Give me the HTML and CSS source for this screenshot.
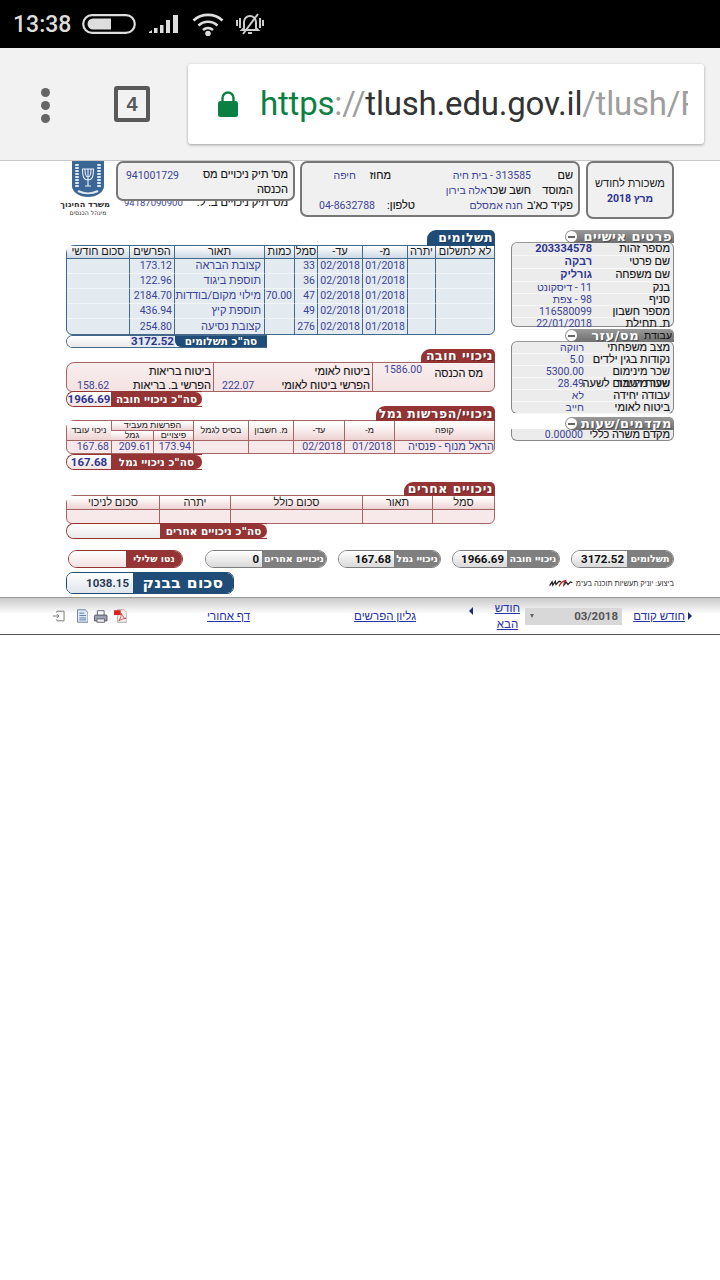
FILE: index.html
```
<!DOCTYPE html>
<html lang="he">
<head>
<meta charset="utf-8">
<title>משכורת לחודש</title>
<link rel="stylesheet" href="styles.css">
</head>
<body>
<header class="statusbar" dir="ltr">
  <span class="clock">13:38</span>
  <svg class="sb-battery" width="54" height="20" viewBox="0 0 54 20"><rect x="1.2" y="1.2" width="51.6" height="17.6" rx="8.8" fill="none" stroke="#ddd" stroke-width="2.2"/><path d="M11 4.5h18v11H11a5.5 5.5 0 0 1 0-11z" fill="#ddd"/></svg>
  <svg class="sb-signal" width="30" height="20" viewBox="0 0 30 20" fill="#ddd"><path d="M0 18l3-2v3H0zM5 14h3.500v5H5zM11 11h3.500v8H11zM17 6h4v13h-4zM24 1h5v18h-5z"/></svg>
  <svg class="sb-wifi" width="32" height="23" viewBox="0 0 32 23" fill="none" stroke="#ddd" stroke-width="2.600"><path d="M1.500 7.500C9.500 0 22.500 0 30.500 7.500"/><path d="M6.500 12.500c5.500-5 13.500-5 19 0"/><path d="M11 17c3-2.500 7-2.500 10 0"/><circle cx="16" cy="20.500" r="1.500" fill="#ddd"/></svg>
  <svg class="sb-bell" width="28" height="22" viewBox="0 0 28 22" fill="none" stroke="#ccc" stroke-width="2"><path d="M8 15V9a6 6 0 0 1 12 0v6l2 2H6z"/><path d="M1 7v6M4 5v10M24 5v10M27 7v6M12 20h4"/><path d="M22 1L7 21"/></svg>
</header>

<div class="toolbar" dir="ltr">
  <div class="menu-dots"><i></i><i></i><i></i></div>
  <div class="tab-count">4</div>
  <div class="omnibox">
    <svg class="lock" width="20" height="26" viewBox="0 0 20 26"><path d="M4.500 11V7a5.500 5.500 0 0 1 11 0v4" fill="none" stroke="#0b8043" stroke-width="2.400"/><rect y="10" width="20" height="16" rx="2.500" fill="#0b8043"/></svg>
    <div class="url"><span class="u-green">https</span><span class="u-gray">://</span><span class="u-dark">tlush.edu.gov.il</span><span class="u-gray">/tlush/R</span></div>
  </div>
</div>

<main class="sheet" dir="rtl">
  <section class="top">
    <div class="box month">
      <div class="month-t">משכורת לחודש</div>
      <div class="month-v">מרץ 2018</div>
    </div>
    <div class="box info">
      <span class="lb">שם</span><span class="vl">313585 - בית חיה</span><span class="lb mahoz">מחוז</span><span class="vl haifa">חיפה</span>
      <span class="lb">המוסד</span><span class="wide"><span class="lb">חשב שכר</span><span class="vl">אלה בירון</span></span>
      <span class="lb">פקיד כא'ב</span><span class="vl off8">חנה אמסלם</span><span class="lb">טלפון:</span><span class="vl phone" dir="ltr">04-8632788</span>
    </div>
    <div class="tik">
      <div class="box tik-box">
        <span class="lb tik-l">מס' תיק ניכויים מס הכנסה</span>
        <span class="vl tik-v">941001729</span>
      </div>
      <div class="tik-under"><span class="lb">מס' תיק ניכויים ב. ל.</span><span class="vl">94187090900</span></div>
    </div>
    <div class="ministry">
      <svg class="emblem" width="32" height="36" viewBox="0 0 32 36">
        <path d="M0 0h32v25c0 6-7 11-16 11S0 31 0 25z" fill="#3a6796"/>
        <g fill="none" stroke="#e8eef4" stroke-width="1.100">
          <path d="M16 8v17M13 8c0 6 1 8 3 8s3-2 3-8M10.500 8c0 9 2 11 5.500 11s5.500-2 5.500-11"/>
          <path d="M10 8h12M13 25h6"/>
        </g>
        <path d="M5 3v24M27 3v24" stroke="#dfe7ee" stroke-width="3.500" stroke-dasharray="2 1"/>
        <path d="M6 30c6 3 14 3 20 0" stroke="#dfe7ee" stroke-width="2" fill="none"/>
      </svg>
      <div class="min-a">משרד החינוך</div>
      <div class="min-b">מינהל הכנסים</div>
    </div>
  </section>

  <section class="cols">
    <div class="right-col">
      <div class="ptab"><span class="ptab-t">פרטים אישיים</span><i class="minus"></i></div>
      <div class="pbox p-a">
        <div class="prow"><span class="plb">מספר זהות</span><span class="pv strong">203334578</span></div>
        <div class="prow"><span class="plb">שם פרטי</span><span class="pv strong">רבקה</span></div>
        <div class="prow"><span class="plb">שם משפחה</span><span class="pv strong">גורליק</span></div>
        <div class="prow"><span class="plb">בנק</span><span class="pv">11 - דיסקונט</span></div>
        <div class="prow"><span class="plb">סניף</span><span class="pv">98 - צפת</span></div>
        <div class="prow"><span class="plb">מספר חשבון</span><span class="pv">116580099</span></div>
        <div class="prow"><span class="plb">ת. תחילת</span><span class="pv">22/01/2018</span></div>
      </div>
      <div class="ptab ptab-2"><span class="ptab-dark">עבודת</span><span class="ptab-t">מס/עזר</span><i class="minus"></i></div>
      <div class="pbox p-b">
        <div class="prow"><span class="plb">מצב משפחתי</span><span class="pv">רווקה</span></div>
        <div class="prow"><span class="plb">נקודות בגין ילדים</span><span class="pv">5.0</span></div>
        <div class="prow"><span class="plb">שכר מינימום</span><span class="pv">5300.00</span></div>
        <div class="prow"><span class="plb clash">שכר מינימום לשעה<span class="clash-over">שעות העבר</span></span><span class="pv">28.49</span></div>
        <div class="prow"><span class="plb">עבודה יחידה</span><span class="pv">לא</span></div>
        <div class="prow"><span class="plb">ביטוח לאומי</span><span class="pv">חייב</span></div>
      </div>
      <div class="ptab ptab-3"><span class="ptab-t">מקדמים/שעות</span><i class="minus"></i></div>
      <div class="pbox p-c">
        <div class="prow"><span class="plb">מקדם משרה כללי</span><span class="pv">0.00000</span></div>
      </div>
    </div>

    <div class="left-col">
      <div class="tab blue t-pay">תשלומים</div>
      <table class="grid g-blue">
        <colgroup><col class="w59"><col class="w28"><col class="w45"><col class="w45"><col class="w23"><col class="w30"><col class="w90"><col class="w45"><col></colgroup>
        <thead><tr><th>לא לתשלום</th><th>יתרה</th><th>מ-</th><th>עד-</th><th>סמל</th><th>כמות</th><th>תאור</th><th>הפרשים</th><th>סכום חודשי</th></tr></thead>
        <tbody>
          <tr><td></td><td></td><td class="n">01/2018</td><td class="n">02/2018</td><td class="n">33</td><td class="n"></td><td class="t">קצובת הבראה</td><td class="n">173.12</td><td></td></tr>
          <tr><td></td><td></td><td class="n">01/2018</td><td class="n">02/2018</td><td class="n">36</td><td class="n"></td><td class="t">תוספת ביגוד</td><td class="n">122.96</td><td></td></tr>
          <tr><td></td><td></td><td class="n">01/2018</td><td class="n">02/2018</td><td class="n">47</td><td class="n">70.00</td><td class="t">מילוי מקום/בודדות</td><td class="n">2184.70</td><td></td></tr>
          <tr><td></td><td></td><td class="n">01/2018</td><td class="n">02/2018</td><td class="n">49</td><td class="n"></td><td class="t">תוספת קיץ</td><td class="n">436.94</td><td></td></tr>
          <tr><td></td><td></td><td class="n">01/2018</td><td class="n">02/2018</td><td class="n">276</td><td class="n"></td><td class="t">קצובת נסיעה</td><td class="n">254.80</td><td></td></tr>
        </tbody>
      </table>
      <div class="total tot-blue tot-pay"><span class="tot-l">סה"כ תשלומים</span><span class="tot-v">3172.52</span><span class="tot-e"></span></div>

      <div class="tab red t-hova">ניכויי חובה</div>
      <div class="hova">
        <div class="hcell h-1">
          <div class="hrow raise"><span class="lb">מס הכנסה</span><span class="vl">1586.00</span></div>
        </div>
        <div class="hcell h-2">
          <div class="hrow"><span class="lb">ביטוח לאומי</span></div>
          <div class="hrow"><span class="lb">הפרשי ביטוח לאומי</span><span class="vl">222.07</span></div>
        </div>
        <div class="hcell h-3">
          <div class="hrow"><span class="lb">ביטוח בריאות</span></div>
          <div class="hrow"><span class="lb">הפרשי ב. בריאות</span><span class="vl">158.62</span></div>
        </div>
      </div>
      <div class="total tot-red tot-hova"><span class="tot-l">סה"כ ניכויי חובה</span><span class="tot-v">1966.69</span></div>

      <div class="tab red t-gemel">ניכויי/הפרשות גמל</div>
      <table class="grid g-red g-gemel">
        <colgroup><col class="w100"><col class="w50"><col class="w51"><col class="w45"><col class="w55"><col class="w40"><col class="w42"><col></colgroup>
        <thead>
          <tr class="g-h1"><th rowspan="2">קופה</th><th rowspan="2">מ-</th><th rowspan="2">עד-</th><th rowspan="2">מ. חשבון</th><th rowspan="2">בסיס לגמל</th><th colspan="2">הפרשות מעביד</th><th rowspan="2">ניכוי עובד</th></tr>
          <tr class="g-h2"><th>פיצויים</th><th>גמל</th></tr>
        </thead>
        <tbody><tr><td class="t r0">הראל מנוף - פנסיה</td><td class="n">01/2018</td><td class="n">02/2018</td><td></td><td></td><td class="n">173.94</td><td class="n">209.61</td><td class="n">167.68</td></tr></tbody>
      </table>
      <div class="total tot-red tot-gemel"><span class="tot-l">סה"כ ניכויי גמל</span><span class="tot-v">167.68</span></div>

      <div class="tab red t-other">ניכויים אחרים</div>
      <table class="grid g-red g-other">
        <colgroup><col class="w62"><col class="w70"><col class="w132"><col class="w71"><col></colgroup>
        <thead><tr><th>סמל</th><th>תאור</th><th>סכום כולל</th><th>יתרה</th><th>סכום לניכוי</th></tr></thead>
        <tbody><tr><td></td><td></td><td></td><td></td><td></td></tr></tbody>
      </table>
      <div class="total tot-red tot-other"><span class="tot-l">סה"כ ניכויים אחרים</span><span class="tot-e"></span></div>
    </div>
  </section>

  <section class="summary">
    <div class="pill s1"><span class="pill-l">תשלומים</span><span class="pill-v">3172.52</span></div>
    <div class="pill s2"><span class="pill-l">ניכויי חובה</span><span class="pill-v">1966.69</span></div>
    <div class="pill s3"><span class="pill-l">ניכויי גמל</span><span class="pill-v">167.68</span></div>
    <div class="pill s4"><span class="pill-l">ניכויים אחרים</span><span class="pill-v">0</span></div>
    <div class="pill s5"><span class="pill-l">נטו שלילי</span><span class="pill-v"></span></div>
  </section>
  <section class="bankrow">
    <div class="credit">ביצוע: יוניק תעשיות תוכנה בע"מ
      <svg class="uniq" width="24" height="11" viewBox="0 0 38 11"><path d="M1 9l4-6 1 5 4-6 1 5 5-5 3 1M24 8l3-5 3 4 4-4 3 1" fill="none" stroke="#222" stroke-width="2"/><path d="M16 10c2-5 6-8 10-9-2 3-3 6-3 9" fill="none" stroke="#b02020" stroke-width="1.800"/></svg>
    </div>
    <div class="bank"><span class="bank-l">סכום בבנק</span><span class="bank-v">1038.15</span></div>
  </section>
</main>

<nav class="footer" dir="rtl">
  <span class="arr arr-prev"></span>
  <a class="lnk l-prev" href="#">חודש קודם</a>
  <div class="sel"><span>03/2018</span><i class="sel-arrow"></i></div>
  <a class="lnk l-next" href="#">חודש הבא</a>
  <span class="arr arr-next"></span>
  <a class="lnk l-gil" href="#">גליון הפרשים</a>
  <a class="lnk l-back" href="#">דף אחורי</a>
  <div class="f-icons" dir="ltr">
    <svg width="12" height="12" viewBox="0 0 12 12" fill="none" stroke="#777"><path d="M4 2.500V1h7.500v10H4V9.500"/><path d="M0 6h6M4 4l2 2-2 2"/></svg>
    <svg class="fi-doc" width="12" height="14" viewBox="0 0 12 14"><path d="M.5.500h8l3 3v10H.5z" fill="#dfe8f4" stroke="#6d83a8"/><path d="M2.500 4h5M2.500 6.500h7M2.500 9h7M2.500 11h7" stroke="#5f7da8"/></svg>
    <svg class="fi-print" width="14" height="13" viewBox="0 0 14 13"><path d="M3.500.5h7v5h-7z" fill="#fff" stroke="#667"/><path d="M.5 6a1 1 0 0 1 1-1h11a1 1 0 0 1 1 1v5h-13z" fill="#9aa3ad" stroke="#556"/><path d="M3 9h8v3.500H3z" fill="#eee" stroke="#667"/></svg>
    <svg class="fi-pdf" width="14" height="14" viewBox="0 0 14 14"><path d="M3.500.500h7l3 3v10h-10z" fill="#f2eeee" stroke="#b9a9a9"/><path d="M0 1h7v5H0z" fill="#d8231f"/><path d="M5 12c2-3 3-6 2.500-8 1 3 2.500 5 5 5.500-3 0-5 1-7.500 2.500z" fill="none" stroke="#c0392b" stroke-width=".8"/></svg>
  </div>
</nav>
</body>
</html>
```

FILE: styles.css
```
* { box-sizing: border-box; }
html, body { margin: 0; padding: 0; background: #fff; }
body { width: 720px; height: 1280px; overflow: hidden; font-family: Roboto, "Liberation Sans", sans-serif; font-size: 11px; color: #222; }

/* status bar */
.statusbar { height: 48px; background: #000; display: flex; align-items: center; padding-left: 13px; }
.clock { color: #ddd; font-size: 23px; font-weight: 500; width: 69px; }
.sb-battery { margin-right: 13px; }
.sb-signal { margin-right: 13px; }
.sb-wifi { margin-right: 12px; }

/* browser toolbar */
.toolbar { height: 113px; background: #f2f2f2; border-bottom: 1px solid #c9c9c9; display: flex; align-items: flex-start; position: relative; }
.menu-dots { margin: 40px 0 0 41px; width: 10px; display: flex; flex-direction: column; gap: 4px; }
.menu-dots i { width: 9px; height: 9px; border-radius: 50%; background: #666; display: block; }
.tab-count { margin: 38px 0 0 63px; width: 36px; height: 36px; border: 4px solid #595959; border-radius: 3px; color: #595959; font-weight: 700; font-size: 20px; line-height: 28px; text-align: center; font-family: "Liberation Sans", sans-serif; }
.omnibox { margin: 16px 0 0 38px; width: 516px; height: 80px; background: #fff; border-radius: 3px; box-shadow: 0 1px 3px rgba(0,0,0,.35); display: flex; align-items: center; padding: 0 16px 0 30px; }
.lock { flex: none; margin-right: 22px; }
.url { flex: 1; overflow: hidden; white-space: nowrap; font-size: 33px; line-height: 40px; letter-spacing: -.2px; }
.u-green { color: #0b8043; }
.u-gray { color: #9e9e9e; }
.u-dark { color: #333; }

/* sheet */
.sheet { height: 436px; padding: 0 46px 0 66px; }
.box { background: #f0f0f0; border: 2px solid #777; border-radius: 7px; }
.lb { color: #161616; white-space: nowrap; font-size: 11px; -webkit-text-stroke: .15px #161616; }
.vl { color: #3b4398; white-space: nowrap; font-size: 10.500px; }

.top { height: 59px; display: flex; align-items: flex-start; }
.month { width: 88px; height: 58px; text-align: center; padding-top: 14px; }
.month-t { font-size: 11px; color: #222; line-height: 14px; }
.month-v { font-size: 10.500px; font-weight: 700; color: #2d3590; line-height: 16px; }
.info { width: 280px; height: 56px; margin-right: 6px; display: grid; grid-template-columns: 42px 116px 40px 1fr; grid-template-rows: 15px 15px 15px; padding: 5px 5px 0 0; align-items: center; }
.wide { grid-column: 2 / 5; display: flex; }
.mahoz { margin-right: 24px; }
.haifa { margin-right: 19px; }
.off8 { margin-right: 8px; }
.phone { justify-self: start; }
.tik { width: 179px; margin-right: 5px; }
.tik-box { height: 40px; display: flex; padding: 4px 5px 0 0; position: relative; }
.tik-l { width: 94px; white-space: normal; line-height: 15px; }
.tik-v { margin: 2px 15px 0 0; }
.tik-under { display: flex; gap: 14px; margin-top: -3px; line-height: 10px; padding-right: 7px; }
.tik-under .vl { font-size: 9.500px; }
.ministry { width: 44px; margin-right: 6px; text-align: center; }
.emblem { display: block; margin: 0 6px; }
.min-a { font-size: 8.200px; line-height: 10px; margin-top: 2px; white-space: nowrap; color: #333; font-family: "DejaVu Sans", sans-serif; font-weight: 700; }
.min-b { font-size: 6.200px; line-height: 8px; white-space: nowrap; color: #333; font-family: "DejaVu Sans", sans-serif; }

/* columns */
.cols { display: flex; margin-top: 10px; gap: 16px; height: 307px; }
.right-col { width: 163px; flex: none; }
.left-col { width: 429px; flex: none; }

/* right panels */
.ptab { height: 13px; width: 109px; background: linear-gradient(#9a9a9a, #6f6f6f); border-radius: 8px 6px 0 8px; display: flex; align-items: center; padding: 0 2px 0 1px; color: #fff; font: 700 13px/13px "DejaVu Sans", sans-serif; position: relative; z-index: 1; text-shadow: 1px 1px 0 rgba(0,0,0,.35); }
.ptab-t { letter-spacing: .5px; white-space: nowrap; }
.minus { width: 11px; height: 11px; border-radius: 50%; background: #fff; margin-right: auto; flex: none; display: flex; align-items: center; justify-content: center; }
.minus::before { content: ""; width: 7px; height: 2px; background: #666; }
.ptab-2 { margin-top: 2px; }
.ptab-dark { color: #111; font: 400 10.500px/13px "Liberation Sans", sans-serif; margin-left: 5px; text-shadow: none; }
.ptab-3 { margin-top: 3px; }
.pbox { background: #ececec; border: 1px solid #888; border-top-color: #999; padding: 0 3px 0 0; margin-top: -1px; }
.p-a { height: 85px; width: 163px; border-radius: 6px; }
.p-b { height: 73px; border-radius: 6px; }
.p-c { height: 12px; border-top: 0; border-radius: 0 0 6px 6px; overflow: hidden; }
.prow { display: flex; align-items: center; line-height: 12px; border-bottom: 1px solid #f7f7f7; }
.p-a .prow { height: 12px; }
.p-a .prow:nth-child(-n+3) { height: 13px; }
.p-b .prow { height: 12px; }
.p-c .prow { height: 11px; border: 0; line-height: 10px; }
.plb { font-size: 11px; color: #161616; white-space: nowrap; flex: none; width: 78px; position: relative; -webkit-text-stroke: .15px #161616; }
.p-b .plb { width: 86px; }
.p-c .plb { width: 87px; }
.pv { color: #3b4398; font-size: 10.500px; white-space: nowrap; }
.pv.strong { font-weight: 700; font-size: 11px; color: #2d3590; }
.clash-over { position: absolute; right: 0; top: 0; color: #222; }

/* tabs */
.tab { margin-left: auto; color: #fff; font: 700 12.500px/14px "DejaVu Sans", sans-serif; letter-spacing: .5px; border-radius: 5px 0 0 0; border-top-left-radius: 9px; border-top-right-radius: 5px; padding-right: 2px; white-space: nowrap; text-align: right; position: relative; z-index: 1; text-shadow: 1px 1px 0 rgba(0,0,0,.3); overflow: hidden; }
.tab.blue { background: #1f4d78; }
.tab.red { background: #953434; }
.t-pay { width: 68px; height: 16px; margin-bottom: -1px; line-height: 16px; }
.t-hova { width: 74px; height: 14px; margin-top: 1px; margin-bottom: -1px; }
.t-gemel { width: 119px; height: 15px; margin-top: -1px; margin-bottom: -1px; line-height: 15px; }
.t-other { width: 91px; height: 14px; margin-top: 12px; margin-bottom: -1px; }

/* grid tables */
.grid { width: 429px; table-layout: fixed; border-collapse: separate; border-spacing: 0; font-size: 11px; }
.grid th, .grid td { padding: 0; font-weight: 400; text-align: center; overflow: hidden; white-space: nowrap; }
.w23 { width: 23px; } .w28 { width: 28px; } .w30 { width: 30px; } .w40 { width: 40px; } .w42 { width: 42px; } .w45 { width: 45px; } .w50 { width: 50px; } .w51 { width: 51px; } .w55 { width: 55px; } .w59 { width: 59px; } .w62 { width: 62px; } .w70 { width: 70px; } .w71 { width: 71px; } .w90 { width: 90px; } .w100 { width: 100px; } .w132 { width: 132px; }

.g-blue { border: 1px solid #44688a; height: 90px; background: #e3eaf0; border-radius: 8px 0 6px 6px; }
.g-blue thead th { height: 13px; background: linear-gradient(#fff, #cdd9e4); border-bottom: 1px solid #44688a; border-left: 1px solid #44688a; color: #161616; line-height: 12px; }
.g-blue tbody td { height: 15px; border-left: 1px solid #44688a; border-bottom: 1px solid #f2f5f8; line-height: 14px; color: #3b4398; }
.g-blue tbody tr:last-child td { border-bottom: 0; }
.grid th:last-child, .grid td:last-child { border-left: 0 !important; }
.grid td.n { text-align: right; direction: ltr; padding-right: 2px; color: #3b4398; font-size: 10.500px; }
.grid td.t { text-align: right; padding-right: 3px; color: #3b4398; }
.grid td.r0 { padding-right: 0; }

.g-red { border: 1px solid #a66464; background: #f7e9e9; border-radius: 8px 0 6px 6px; }
.g-red th { background: linear-gradient(#fff 10%, #eed2d2); border-left: 1px solid #a66464; border-bottom: 1px solid #a66464; color: #222; }
.g-red td { border-left: 1px solid #a66464; color: #3b4398; }
.g-gemel { height: 33px; }
.g-gemel th { font-size: 9px; line-height: 9px; }
.g-gemel .g-h1 th { height: 9px; }
.g-gemel .g-h2 th { height: 10px; }
.g-gemel td { height: 12px; line-height: 12px; }
.g-other { height: 28px; }
.g-other th { height: 13px; line-height: 13px; font-size: 11px; }
.g-other td { height: 13px; }

/* section two */
.hova { height: 30px; border: 1px solid #a66464; border-radius: 8px 0 6px 6px; background: linear-gradient(#f9eeee, #f4e2e2); display: grid; grid-template-columns: 122px 159px 1fr; }
.hcell { padding-top: 1px; border-left: 1px solid #a66464; }
.hcell:last-child { border-left: 0; }
.hrow { display: flex; justify-content: space-between; height: 14px; line-height: 15px; padding: 0 2px 0 0; }
.h-2 .hrow .vl { margin-left: 8px; }
.h-3 .hrow .vl { margin-left: 10px; }
.raise { padding: 0 11px; line-height: 14px; }
.raise .lb { margin-top: 3px; }
.raise .vl { margin-top: -1px; }

/* totals */
.total { display: flex; height: 16px; border-radius: 8px 0 0 8px; overflow: hidden; }
.tot-l { color: #fff; font: 700 10.500px/16px "DejaVu Sans", sans-serif; white-space: nowrap; text-align: center; text-shadow: 1px 0 0 rgba(0,0,0,.2); }
.tot-v { color: #2d3590; font-weight: 700; font-size: 11.500px; line-height: 15px; text-align: center; }
.tot-e { flex: 1; background: linear-gradient(#fff, #e9e9e9); }
.tot-pay { width: 201px; height: 13px; margin-right: 228px; border: 1px solid #44688a; border-width: 1px 0 1px 1px; }
.tot-pay .tot-l { width: 92px; background: #1f4d78; line-height: 11px; border-radius: 0 0 0 6px; flex: none; }
.tot-pay .tot-v { width: 45px; background: #e3eaf0; line-height: 11px; flex: none; }
.tot-red { border: 1px solid #953434; border-width: 1px 0 1px 1px; background: #f7e9e9; }
.tot-red .tot-l { background: #953434; line-height: 14px; flex: none; }
.tot-red .tot-v { flex: 1; background: linear-gradient(#fff, #f3e3e3); line-height: 14px; }
.tot-hova, .tot-gemel { width: 136px; margin-right: 293px; }
.tot-hova { margin-top: -1px; }
.tot-hova .tot-l, .tot-gemel .tot-l { width: 91px; border-radius: 0 7px 7px 0; }
.tot-other { width: 201px; margin: -1px 228px 0 0; }
.tot-other .tot-l { width: 107px; border-radius: 0 7px 7px 0; }

/* summary */
.summary { display: flex; gap: 11px; margin-top: 13px; height: 18px; }
.pill { display: flex; height: 18px; border: 1px solid #7d7d7d; border-radius: 9px; overflow: hidden; flex: none; }
.pill-l { background: #7f7f7f; color: #fff; font: 700 9.500px/16px "DejaVu Sans", sans-serif; text-align: center; white-space: nowrap; flex: none; overflow: hidden; }
.pill-v { flex: 1; background: linear-gradient(#fff, #d9d9d9); color: #111; font-weight: 700; font-size: 11.500px; line-height: 16px; padding-right: 3px; }
.s1 { width: 103px; } .s1 .pill-l { width: 46px; }
.s2 { width: 108px; } .s2 .pill-l { width: 52px; }
.s3 { width: 103px; } .s3 .pill-l { width: 46px; }
.s4 { width: 122px; } .s4 .pill-l { width: 64px; }
.s5 { width: 115px; margin-right: 11px; border-color: #953434; } .s5 .pill-l { width: 56px; background: #953434; } .s5 .pill-v { background: linear-gradient(#fff, #f3e1e1); }

.bankrow { display: flex; justify-content: space-between; align-items: center; height: 22px; margin-top: 4px; }
.credit { color: #333; font-size: 7.500px; white-space: nowrap; display: flex; align-items: center; gap: 3px; margin-top: 1px; }
.uniq { flex: none; }
.bank { width: 168px; height: 22px; display: flex; border: 1px solid #1f4d78; border-radius: 7px; overflow: hidden; }
.bank-l { width: 100px; background: #1f4d78; color: #fff; font: 700 15.500px/20px "DejaVu Sans", sans-serif; text-align: center; letter-spacing: .3px; white-space: nowrap; flex: none; overflow: hidden; }
.bank-v { flex: 1; background: linear-gradient(#fff, #dfe6ec); color: #2a3a55; font-weight: 700; font-size: 11.500px; line-height: 20px; padding-right: 4px; }

/* footer bar */
.footer { height: 38px; border-top: 1px solid #999; border-bottom: 1px solid #555; background: linear-gradient(#c9c9c9, #fff 45%); display: flex; align-items: center; padding-right: 28px; }
.lnk { color: #2632a8; text-decoration: underline; font-size: 11.500px; line-height: 16px; white-space: nowrap; flex: none; }
.arr { width: 0; height: 0; flex: none; border-top: 4px solid transparent; border-bottom: 4px solid transparent; }
.arr-prev { border-right: 4px solid #1e2a80; margin-left: 3px; margin-bottom: 1px; transform: scaleX(-1); }
.arr-next { border-left: 4px solid #1e2a80; margin-right: 22px; margin-bottom: 10px; transform: scaleX(-1); }
.l-prev { width: 51px; }
.sel { width: 97px; height: 17px; margin-right: 12px; background: #d8d8d8; display: flex; justify-content: space-between; align-items: center; padding: 0 4px 0 5px; font-weight: 700; font-size: 11.500px; color: #555; }
.sel-arrow { width: 0; height: 0; border-top: 4px solid #666; border-left: 2.500px solid transparent; border-right: 2.500px solid transparent; }
.l-next { width: 25px; white-space: normal; text-align: center; margin-right: 5px; }
.l-gil { margin-right: 53px; }
.l-back { margin-right: 104px; }
.f-icons { margin-right: 80px; width: 74px; display: flex; align-items: center; }
.fi-doc { margin-left: 12px; }
.fi-print { margin-left: 6px; }
.fi-pdf { margin-left: 6px; }
```
